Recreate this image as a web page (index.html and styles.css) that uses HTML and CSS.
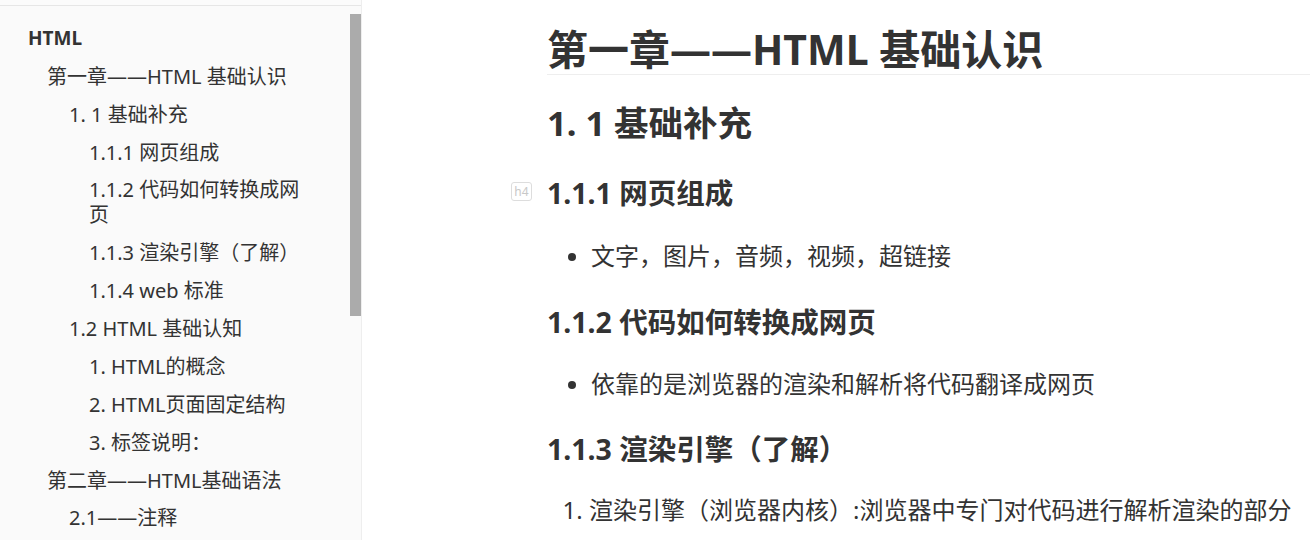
FILE: index.html
```html
<!DOCTYPE html>
<html lang="zh-CN">
<head>
<meta charset="utf-8">
<title>HTML</title>
<link rel="stylesheet" href="styles.css">
</head>
<body>
<div class="app">
  <aside class="sidebar">
    <div class="topline"></div>
    <div class="outline">
      <div class="item l0">HTML</div>
      <div class="item l1">第一章——HTML 基础认识</div>
      <div class="item l2">1. 1 基础补充</div>
      <div class="item l3">1.1.1 网页组成</div>
      <div class="item l3">1.1.2 代码如何转换成网页</div>
      <div class="item l3">1.1.3 渲染引擎（了解）</div>
      <div class="item l3">1.1.4 web 标准</div>
      <div class="item l2">1.2 HTML 基础认知</div>
      <div class="item l3">1. HTML的概念</div>
      <div class="item l3">2. HTML页面固定结构</div>
      <div class="item l3">3. 标签说明：</div>
      <div class="item l1">第二章——HTML基础语法</div>
      <div class="item l2">2.1——注释</div>
    </div>
    <div class="scrollthumb"></div>
  </aside>
  <main class="content">
    <h1 class="h1">第一章——HTML 基础认识</h1>
    <h2 class="h2">1. 1 基础补充</h2>
    <h4 class="h4 first"><span class="badge">h4</span>1.1.1 网页组成</h4>
    <ul class="ul first-list"><li>文字，图片，音频，视频，超链接</li></ul>
    <h4 class="h4">1.1.2 代码如何转换成网页</h4>
    <ul class="ul"><li>依靠的是浏览器的渲染和解析将代码翻译成网页</li></ul>
    <h4 class="h4">1.1.3 渲染引擎（了解）</h4>
    <ol class="ol"><li>渲染引擎（浏览器内核）:浏览器中专门对代码进行解析渲染的部分</li></ol>
  </main>
</div>
</body>
</html>
```

FILE: styles.css
```css
html, body {
  margin: 0;
  padding: 0;
  background: #ffffff;
  overflow: hidden;
}
body {
  font-family: "Noto Sans", "Noto Sans CJK SC", sans-serif;
  color: #333333;
}
.app {
  display: flex;
  width: 1310px;
  height: 540px;
}
.sidebar {
  position: relative;
  width: 361px;
  flex: none;
  background: #fafafa;
  border-right: 1px solid #eeeeee;
  height: 540px;
}
.topline {
  height: 5px;
  border-bottom: 1px solid #e6e6e6;
  background: #fbfbfb;
}
.outline {
  padding-top: 13.5px;
  padding-left: 28px;
  width: 290px;
}
.item {
  font-size: 20px;
  line-height: 25px;
  padding: 6.45px 0;
  color: #333333;
}
.l0 { font-weight: 700; font-size: 19px; }
.l1 { padding-left: 19px; }
.l2 { padding-left: 41px; }
.l3 { padding-left: 61px; }
.scrollthumb {
  position: absolute;
  left: 350px;
  top: 14px;
  width: 11px;
  height: 302px;
  background: #ababab;
}
.content {
  flex: 1;
  padding-left: 185px;
  padding-top: 24px;
}
.h1 {
  margin: 0;
  font-size: 41px;
  line-height: 50px;
  font-weight: 700;
  border-bottom: 1px solid #eeeeee;
  color: #333333;
}
.h2 {
  margin: 26px 0 0;
  font-size: 34.5px;
  line-height: 44px;
  font-weight: 700;
}
.h4 {
  position: relative;
  margin: 29.5px 0 0;
  font-size: 28.5px;
  line-height: 36px;
  font-weight: 700;
}
.h4.first { margin-top: 30px; }
.badge {
  position: absolute;
  left: -36px;
  top: 7px;
  width: 19px;
  height: 17px;
  border: 1px solid #dddddd;
  border-radius: 3px;
  font-size: 12px;
  line-height: 17px;
  font-weight: 400;
  color: #c8c8c8;
  text-align: center;
}
.ul, .ol {
  margin: 26px 0 0;
  padding-left: 44px;
  font-size: 24px;
  line-height: 36px;
}
.ul.first-list { margin-top: 27px; }
.ol { padding-left: 42px; margin-top: 24.5px; }
.ul li::marker { font-size: 22px; }
```
